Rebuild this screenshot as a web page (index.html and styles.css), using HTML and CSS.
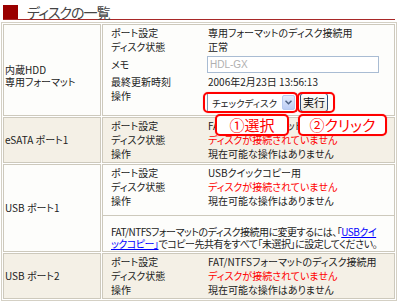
FILE: index.html
```html
<!DOCTYPE html>
<html lang="ja">

<head>
    <meta charset="UTF-8">
    <title>ディスクの一覧</title>
    <link rel="stylesheet" href="styles.css">
</head>

<body>

    <div class="title">
        <span class="mark"></span>
        <h1>ディスクの一覧</h1>
    </div>

    <table class="disks">
        <colgroup>
            <col class="col-port">
            <col>
        </colgroup>
        <!-- 内蔵HDD -->
        <tr class="white">
            <th class="port first">内蔵HDD<br>専用フォーマット</th>
            <td class="body">
                <div class="sect sect-main">
                    <table class="info">
                        <tr><td class="lbl">ポート設定</td><td>専用フォーマットのディスク接続用</td></tr>
                        <tr><td class="lbl">ディスク状態</td><td>正常</td></tr>
                        <tr class="memo"><td class="lbl">メモ</td><td><input class="memo-input" type="text" value="HDL-GX" disabled></td></tr>
                        <tr><td class="lbl">最終更新時刻</td><td>2006年2月23日 13:56:13</td></tr>
                        <tr class="op"><td class="lbl">操作</td>
                            <td>
                                <div class="ops">
                                    <div class="select">
                                        <span class="select-text">チェックディスク</span>
                                        <span class="select-arrow">
                                            <svg width="7" height="5" viewBox="0 0 7 5"><path d="M0.5 0.8 L3.5 3.8 L6.5 0.8" fill="none" stroke="#4d6185" stroke-width="1.5"/></svg>
                                        </span>
                                    </div>
                                    <button class="run">実行</button>

                                    <!-- 説明用の枠 -->
                                    <span class="mark-box box-select"></span>
                                    <span class="mark-box box-run"></span>
                                    <span class="tag tag-1">①選択</span>
                                    <span class="tag tag-2">②クリック</span>
                                </div>
                            </td>
                        </tr>
                    </table>
                </div>
            </td>
        </tr>

        <!-- eSATA -->
        <tr class="beige">
            <th class="port">eSATA ポート1</th>
            <td class="body">
                <div class="sect">
                    <table class="info">
                        <tr><td class="lbl">ポート設定</td><td>FAT/NTFSフォーマットのディスク接続用</td></tr>
                        <tr><td class="lbl">ディスク状態</td><td class="err">ディスクが接続されていません</td></tr>
                        <tr><td class="lbl">操作</td><td>現在可能な操作はありません</td></tr>
                    </table>
                </div>
            </td>
        </tr>

        <!-- USB 1 -->
        <tr class="white">
            <th class="port">USB ポート1</th>
            <td class="body">
                <div class="sect sect-top">
                    <table class="info">
                        <tr><td class="lbl">ポート設定</td><td>USBクイックコピー用</td></tr>
                        <tr><td class="lbl">ディスク状態</td><td class="err">ディスクが接続されていません</td></tr>
                        <tr><td class="lbl">操作</td><td>現在可能な操作はありません</td></tr>
                    </table>
                </div>
                <div class="sect note">
                    FAT/NTFSフォーマットのディスク接続用に変更するには、「<a href="#">USBクイ<br>ックコピー」</a>でコピー先共有をすべて「未選択」に設定してください。
                </div>
            </td>
        </tr>

        <!-- USB 2 -->
        <tr class="beige">
            <th class="port">USB ポート2</th>
            <td class="body">
                <div class="sect">
                    <table class="info">
                        <tr><td class="lbl">ポート設定</td><td>FAT/NTFSフォーマットのディスク接続用</td></tr>
                        <tr><td class="lbl">ディスク状態</td><td class="err">ディスクが接続されていません</td></tr>
                        <tr><td class="lbl">操作</td><td>現在可能な操作はありません</td></tr>
                    </table>
                </div>
            </td>
        </tr>
    </table>

</body>

</html>
```

FILE: styles.css
```css
* {
    padding: 0;
    margin: 0;
    box-sizing: border-box;
}

body {
    width: 400px;
    background-color: #fff;
    color: #222;
    font-family: "Noto Sans CJK JP", sans-serif;
    font-size: 10px;
    font-feature-settings: "palt";
}

/* タイトル */
.title {
    display: flex;
    align-items: flex-end;
    height: 20px;
    margin: 0 5px 0 3px;
    padding-top: 5px;
    border-bottom: 1px solid #a82828;
}

.title .mark {
    width: 15px;
    height: 14px;
    background-color: #9a0000;
}

.title h1 {
    margin-left: 9px;
    font-size: 14px;
    font-weight: normal;
    line-height: 14px;
    letter-spacing: -1px;
    color: #444;
}

/* 一覧テーブル */
.disks {
    width: 396px;
    margin: 2px 0 0 1px;
    border: 1px solid #d4d0c4;
    border-spacing: 1px;
    table-layout: fixed;
}

.col-port {
    width: 98px;
}

.disks > tbody > tr > th,
.disks > tbody > tr > td {
    border: 1px solid #cdc9bc;
}

.white > th,
.white > td {
    background-color: #fdfdfb;
}

.beige > th,
.beige > td {
    background-color: #f4f0e6;
}

.port {
    padding: 0 1px;
    font-weight: normal;
    text-align: left;
    vertical-align: middle;
    line-height: 12px;
    white-space: nowrap;
}

.port.first {
    padding-top: 12px;
    line-height: 12px;
}

.body {
    padding: 0;
    vertical-align: top;
}

.sect {
    padding: 1px 8px;
}

.sect-main {
    padding-bottom: 3px;
}

.sect-top {
    padding-bottom: 7px;
}

.info {
    border-collapse: collapse;
}

.info td {
    padding: 0;
    line-height: 14px;
    height: 14px;
    white-space: nowrap;
    vertical-align: middle;
}

.info td.lbl {
    width: 97px;
}

.err {
    color: #f00;
}

/* メモ */
.memo td {
    height: 21px;
}

.memo-input {
    display: block;
    width: 172px;
    height: 17px;
    margin-left: -1px;
    padding-left: 2px;
    border: 1px solid #a9bcd3;
    background-color: #fff;
    color: #b0b0b0;
    font-family: "Liberation Sans", sans-serif;
    font-size: 10px;
}

/* 操作 */
.op td {
    height: 23px;
    vertical-align: top;
}

.ops {
    position: relative;
    display: flex;
    gap: 3px;
    margin-left: -1px;
    padding-top: 4px;
}

.select {
    display: flex;
    align-items: center;
    justify-content: space-between;
    width: 90px;
    height: 19px;
    padding: 1px 1px 1px 4px;
    border: 1px solid #7f9db9;
    background-color: #fff;
    font-size: 9.5px;
}

.select-arrow {
    display: flex;
    align-items: center;
    justify-content: center;
    width: 13px;
    height: 15px;
    border: 1px solid #b8cbf0;
    border-radius: 2px;
    background: linear-gradient(#e3ecfd, #bccdf5);
}

.run {
    width: 28px;
    height: 19px;
    border: 1px solid #2d4d7a;
    border-radius: 3px;
    background: linear-gradient(#fefefe, #ebe9e0);
    color: #111;
    font-family: "Noto Sans CJK JP", sans-serif;
    font-size: 11px;
    line-height: 15px;
}

/* 説明用の赤枠 */
.mark-box,
.tag {
    position: absolute;
    border: 2px solid #f00;
    border-radius: 5px;
    box-shadow: 0 0 1px rgba(255, 0, 0, 0.5);
}

.box-select {
    left: -4px;
    top: 3px;
    width: 95px;
    height: 21px;
}

.box-run {
    left: 90px;
    top: 3px;
    width: 38px;
    height: 21px;
}

.tag {
    top: 25px;
    height: 22px;
    background-color: #fff;
    color: #f00;
    font-size: 15px;
    line-height: 18px;
    text-align: center;
    z-index: 10;
}

.tag-1 {
    left: 8px;
    width: 74px;
}

.tag-2 {
    left: 91px;
    width: 89px;
}

/* 注意書き */
.note {
    padding-top: 10px;
    padding-bottom: 1px;
    border-top: 1px solid #cdc9bc;
    line-height: 12px;
    letter-spacing: -0.5px;
    white-space: nowrap;
}

.note a {
    color: #00f;
}
```
